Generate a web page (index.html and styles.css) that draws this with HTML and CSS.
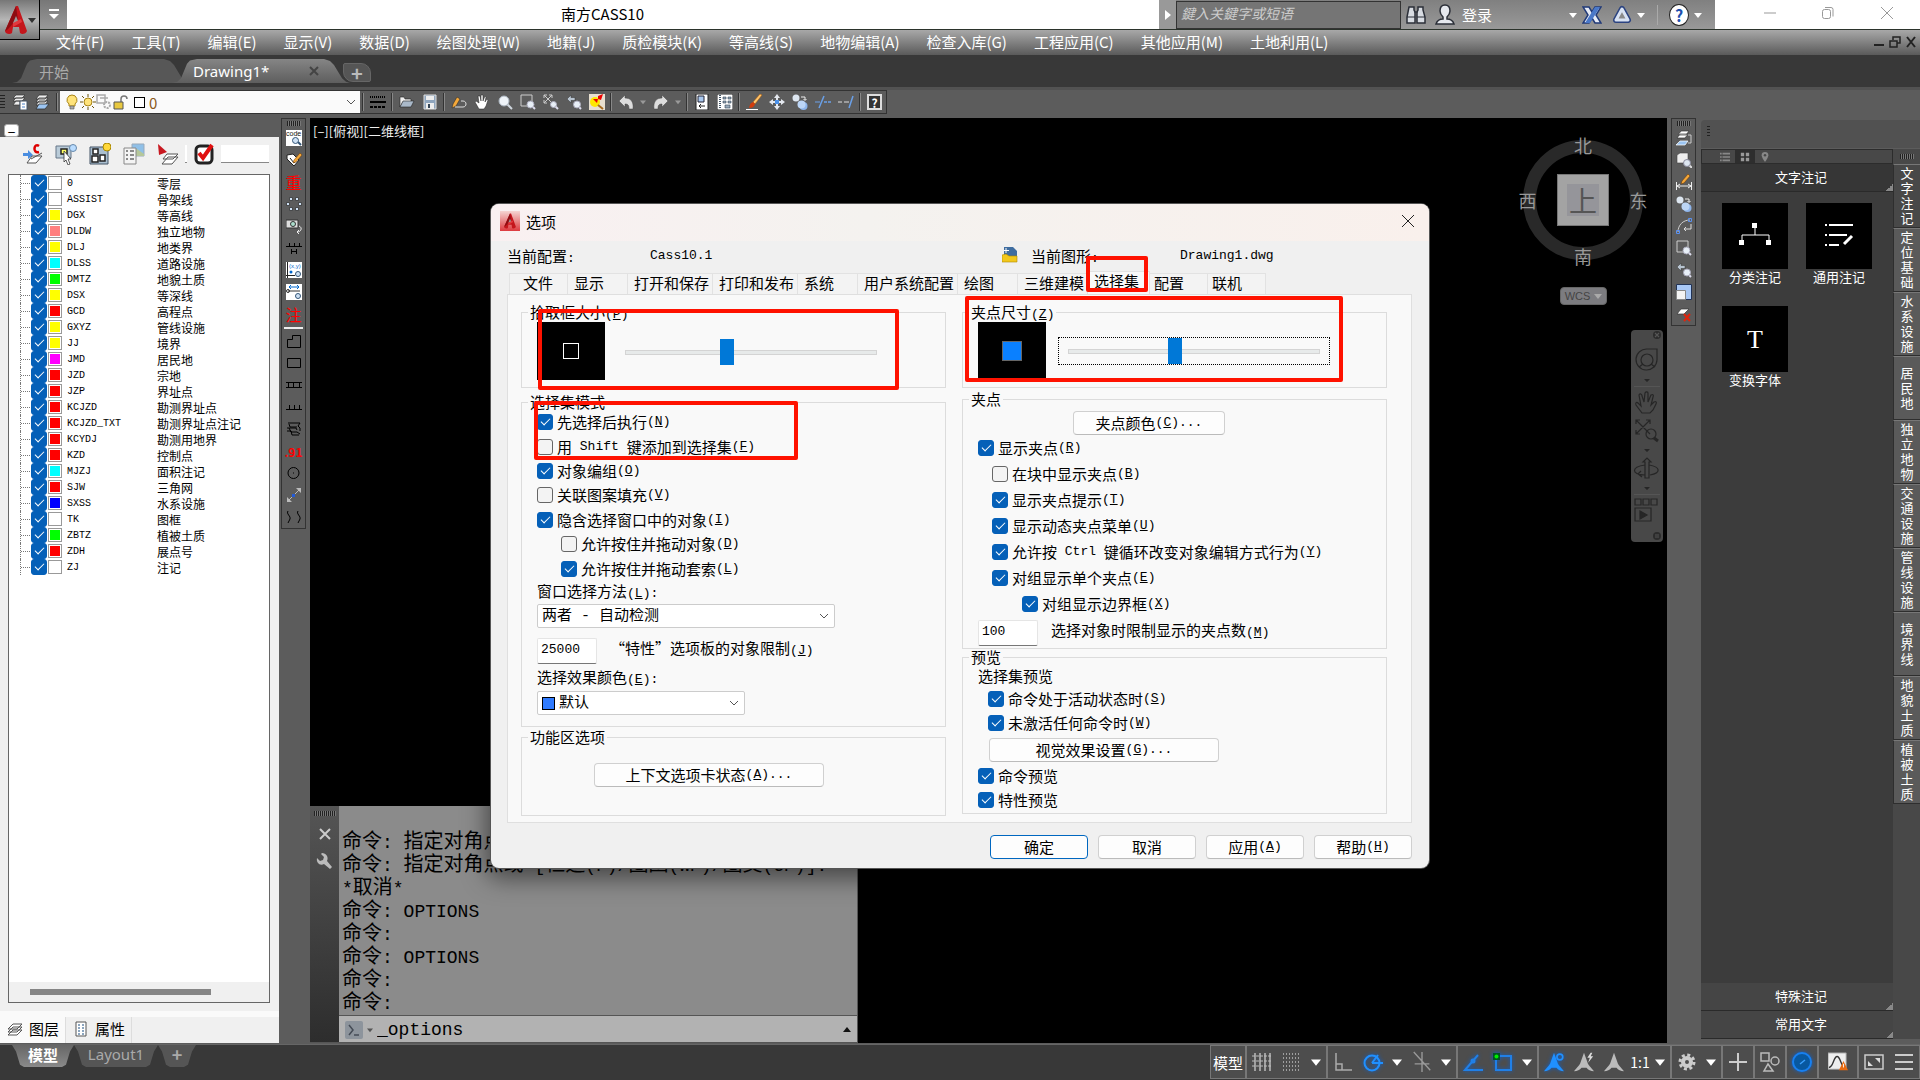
FILE: index.html
```html
<!DOCTYPE html>
<html lang="zh-CN">

<head>
    <meta charset="UTF-8">
    <meta name="viewport" content="width=device-width, initial-scale=1.0">
    <title>南方CASS10</title>
    <link rel="stylesheet" href="styles.css">
</head>

<body>
    <!-- shared icons -->
    <svg class="defs" aria-hidden="true">
        <symbol id="logo" viewBox="0 0 24 30"><path d="M12 1L1 26c0 3 5 4 7 2l1-6h6l1 6c2 2 6 1 7-2L14 1z" fill="#c4161c"/><path d="M12 1L1 26c3-1 6-5 8-8l5-3z" fill="#8d0d12"/><path d="M12 11l3 7H9z" fill="#9a9a9a"/><path d="M9 18l8-4 1 3-9 5z" fill="#e2383d"/></symbol>
        <symbol id="lens" viewBox="0 0 16 16"><path d="M10 10l5 5" stroke="#cfd6dd" stroke-width="2"/><circle cx="7" cy="7" r="5" fill="#eef3f8" stroke="#aab4bf"/></symbol>
        <symbol id="zoomwin" viewBox="0 0 16 16"><path d="M1 1h11v6M1 1v11h6" fill="none" stroke="#ccc"/><path d="M12 12l3 3" stroke="#dde" stroke-width="2"/><circle cx="10.500" cy="10.500" r="3.500" fill="#e8eff7" stroke="#aab"/></symbol>
        <symbol id="zoomext" viewBox="0 0 16 16"><path d="M1 1l8 8M9 1L1 9M1 4V1h3M6 1h3v3M1 6v3h3" fill="none" stroke="#ccc"/><path d="M12 12l3 3" stroke="#dde" stroke-width="2"/><circle cx="10.500" cy="10.500" r="3" fill="#e8eff7" stroke="#aab"/></symbol>
        <symbol id="zoomprev" viewBox="0 0 16 16"><path d="M1 5l4-4v2.500h4v3H5V9z" fill="#b8c4d0" stroke="#333" stroke-width=".5"/><path d="M13 13l2 2" stroke="#dde" stroke-width="2"/><circle cx="11" cy="10.500" r="3.500" fill="#e8eff7" stroke="#aab"/></symbol>
        <symbol id="copy" viewBox="0 0 16 16"><circle cx="4" cy="4" r="3.500" fill="#dde6f0"/><circle cx="11.500" cy="12" r="4" fill="#8db4ea"/><circle cx="9.500" cy="10.500" r="4" fill="#bcd5f5"/><path d="M9 3h4v3M11.500 5L13 6.500 14.500 5" fill="none" stroke="#eee"/></symbol>
        <symbol id="sheets" viewBox="0 0 16 16"><path d="M4 1h9L10 5H1zM4 4h9l-3 4H1zM4 7h9l-3 4H1z" fill="#eee" stroke="#333" stroke-width=".8"/><path d="M4 10h10l-4 5H1z" fill="#9cc5f2" stroke="#333" stroke-width=".8"/></symbol>
        <symbol id="layers" viewBox="0 0 16 16"><path d="M6 9h9l-5 5H1zM6 6h9l-5 5H1zM6 3h9l-5 5H1z" fill="#fff" stroke="#555"/></symbol>
        <symbol id="bulb" viewBox="0 0 16 16"><path d="M8 1a5 5 0 0 0-3 9v2h6v-2a5 5 0 0 0-3-9z" fill="#ffe37a" stroke="#a88418"/><path d="M6 12h4v3H6z" fill="#aaa" stroke="#555" stroke-width=".6"/></symbol>
        <symbol id="undo" viewBox="0 0 16 16"><path d="M1 7l6-6v3c5 0 9 3 8 11H11c0-4-1-5-4-5v3z" fill="#ddd" stroke="#444" stroke-width=".5"/></symbol>
        <symbol id="down" viewBox="0 0 8 8"><path d="M0 2h8L4 7z" fill="currentColor"/></symbol>
        <symbol id="scale" viewBox="0 0 24 24"><path d="M12 1l4 11c1 4 4 6 8 11-4 0-7-1-9-4h-6c-2 3-5 4-9 4 4-5 7-7 8-11z" fill="currentColor"/></symbol>
        <symbol id="chevron" viewBox="0 0 10 6"><path d="M1 1l4 4 4-4" fill="none" stroke="#555"/></symbol>
    </svg>

    <header class="titlebar">
        <button class="app-button" aria-label="应用程序菜单"><svg width="24" height="30"><use href="#logo"/></svg><svg class="arrow dark"><use href="#down"/></svg></button>
        <button class="quick-access" aria-label="自定义快速访问工具栏"><svg width="12" height="12" viewBox="0 0 12 12"><path d="M1 1h10" stroke="#fff" stroke-width="2"/><path d="M1 5h10l-5 5z" fill="#fff"/></svg></button>
        <h1>南方CASS10</h1>
        <div class="infocenter">
            <button class="expand" aria-label="展开"><svg width="6" height="10" viewBox="0 0 6 10"><path d="M0 0l6 5-6 5z" fill="#fff"/></svg></button>
            <input class="search" type="text" placeholder="鍵入关鍵字或短语" aria-label="搜索">
            <button aria-label="查找"><svg width="20" height="20" viewBox="0 0 20 20"><path d="M3 2h5v3l1 2v11H1v-6zM12 2h5v3l2 7v6h-8V7l1-2z" fill="#d8dce2" stroke="#2b2f38" stroke-width="1.500"/><path d="M8 7h4M1 12h8M11 12h8" stroke="#2b2f38"/></svg></button>
            <button class="login"><svg width="20" height="22" viewBox="0 0 20 22"><path d="M10 1c-4 0-5 3-5 6s2 5 3 6v2c-4 0-6 2-7 5h18c-1-3-3-5-7-5v-2c1-1 3-3 3-6s-1-6-5-6z" fill="#e5e8ee" stroke="#2b2f38" stroke-width="1.500"/></svg>登录</button>
            <svg class="arrow"><use href="#down"/></svg>
            <button aria-label="Exchange"><svg width="20" height="20" viewBox="0 0 20 20"><path d="M1 2h6l3 5 3-5h6l-5 8 5 8h-6l-3-5-3 5H1l5-8z" fill="#e6ebf5" stroke="#213a78" stroke-width="1.500"/><path d="M13 2h5L8 18H3z" fill="#4a78c8"/></svg></button>
            <button class="a360" aria-label="Autodesk 360"><svg width="20" height="20" viewBox="0 0 20 20"><path d="M10 4l6 11H4z" fill="none" stroke="#2b4380" stroke-width="6" stroke-linejoin="round"/><path d="M10 4l6 11H4z" fill="#8a8a8a" stroke="#d8e2f2" stroke-width="3" stroke-linejoin="round"/></svg></button>
            <svg class="arrow"><use href="#down"/></svg>
            <span class="divider"></span>
            <button class="help" aria-label="帮助"><span>?</span></button>
            <svg class="arrow"><use href="#down"/></svg>
        </div>
        <div class="window-buttons">
            <button aria-label="最小化"><svg width="14" height="14" viewBox="0 0 14 14"><path d="M1 7h12" stroke="#999"/></svg></button>
            <button aria-label="还原"><svg width="14" height="14" viewBox="0 0 14 14" fill="none" stroke="#999"><rect x="1.500" y="3.500" width="8" height="9" rx="2"/><path d="M4 1.500h6a2 2 0 0 1 2 2v7"/></svg></button>
            <button aria-label="关闭"><svg width="14" height="14" viewBox="0 0 14 14"><path d="M1 1l12 12M13 1L1 13" stroke="#999"/></svg></button>
        </div>
    </header>

    <nav class="menubar">
        <a href="#">文件(F)</a><a href="#">工具(T)</a><a href="#">编辑(E)</a><a href="#">显示(V)</a><a href="#">数据(D)</a><a href="#">绘图处理(W)</a><a href="#">地籍(J)</a><a href="#">质检模块(K)</a><a href="#">等高线(S)</a><a href="#">地物编辑(A)</a><a href="#">检查入库(G)</a><a href="#">工程应用(C)</a><a href="#">其他应用(M)</a><a href="#">土地利用(L)</a>
        <div class="mdi">
            <svg width="12" height="12" viewBox="0 0 12 12"><path d="M1 9h10" stroke="#222" stroke-width="2"/></svg>
            <svg width="12" height="12" viewBox="0 0 12 12" fill="none" stroke="#222" stroke-width="1.500"><path d="M4 4V1h7v6H8M1 5h7v6H1z"/></svg>
            <svg width="12" height="12" viewBox="0 0 12 12"><path d="M2 1l8 10M10 1L2 11" stroke="#222" stroke-width="2"/></svg>
        </div>
    </nav>

    <div class="doc-tabs">
        <button class="doc-tab">开始</button>
        <button class="doc-tab active">Drawing1*<svg width="10" height="10" viewBox="0 0 10 10"><path d="M1 1l8 8M9 1L1 9" stroke="#444" stroke-width="2"/></svg></button>
        <button class="add-tab" aria-label="新图形">+</button>
    </div>

    <div class="toolbar-row">
        <div class="toolbar">
            <span class="grip-v"></span>
            <button><svg viewBox="0 0 16 16"><path d="M4 1h9l-3 3H1zM4 4h9l-3 3H1zM4 7h4v4H1z" fill="#eee" stroke="#333" stroke-width=".7"/><path d="M8 7h7v9H8z" fill="#fff" stroke="#456"/><path d="M10 10h3M10 13h3" stroke="#4a82c8"/></svg></button>
            <button><svg><use href="#sheets"/></svg></button>
            <span class="sep"></span>
            <div class="layer-combo">
                <svg><use href="#bulb"/></svg>
                <svg viewBox="0 0 16 16"><circle cx="8" cy="8" r="4" fill="#ffe37a" stroke="#a88418"/><path d="M8 0v3M8 13v3M0 8h3M13 8h3M2 2l2 2M12 12l2 2M14 2l-2 2M2 14l2-2" stroke="#6b5410"/></svg>
                <svg viewBox="0 0 16 16"><path d="M1 1h8v8H1zM4 4h8" fill="none" stroke="#aaa" stroke-width="1.500"/><circle cx="11" cy="11" r="3" fill="none" stroke="#aaa" stroke-width="2" stroke-dasharray="2 1"/></svg>
                <svg viewBox="0 0 16 16"><path d="M9 8V5a3 3 0 0 1 6 0" fill="none" stroke="#777" stroke-width="1.500"/><path d="M2 8h9v7H2z" fill="#e8c840" stroke="#555"/></svg>
                <span class="layer-color"></span>
                <select aria-label="图层"><option>0</option></select>
                <svg class="chev"><use href="#chevron"/></svg>
            </div>
            <span class="sep"></span>
            <button><svg viewBox="0 0 16 16"><path d="M0 3h16" stroke="#000" stroke-width="2" stroke-dasharray="1 1"/><path d="M0 8h16" stroke="#000" stroke-width="2"/><path d="M0 13h16" stroke="#000" stroke-width="2" stroke-dasharray="3 1"/></svg></button>
            <span class="sep"></span>
            <button><svg viewBox="0 0 16 16"><path d="M1 3h4l1 2h6v3H4l-3 5z" fill="#eee" stroke="#222" stroke-width=".6"/><path d="M4 7h11l-3 6H1z" fill="#aab9c9" stroke="#222" stroke-width=".6"/></svg></button>
            <button><svg viewBox="0 0 16 16"><path d="M2 1h12v14H2z" fill="#8fa5bd" stroke="#ddd"/><path d="M4 2h8v4H4zM4 9h8v6H4z" fill="#eee"/><path d="M6 10h2v4H6z" fill="#345"/></svg></button>
            <span class="sep"></span>
            <button><svg viewBox="0 0 16 16"><path d="M1 14l1-4 4-7 3 2-4 7z" fill="#f4a83a" stroke="#222" stroke-width=".5"/><path d="M4 13h8c4 0 4-6 0-6h-2" fill="none" stroke="#ddd"/></svg></button>
            <button><svg viewBox="0 0 16 16"><path d="M5 15L1 8l1-1 3 2-1-7 2 0 1 5V1h2l0 6 2-5 1 1-1 5 2-3 1 1-2 6-2 3z" fill="#fff" stroke="#222" stroke-width=".5"/></svg></button>
            <button><svg><use href="#lens"/></svg></button>
            <button><svg><use href="#zoomwin"/></svg></button>
            <button><svg><use href="#zoomext"/></svg></button>
            <button><svg><use href="#zoomprev"/></svg></button>
            <button><svg viewBox="0 0 16 16"><path d="M0 0h16v16H0z" fill="#e8e0d0"/><circle cx="6" cy="8" r="5" fill="#ffe800"/><path d="M4 5h5V2l5-2-2 6-3-1-1 4z" fill="#e00"/><path d="M9 11l5 4" stroke="#a66a20" stroke-width="2"/></svg></button>
            <span class="sep"></span>
            <button><svg><use href="#undo"/></svg></button>
            <svg class="arrow mini"><use href="#down"/></svg>
            <button><svg class="flip"><use href="#undo"/></svg></button>
            <svg class="arrow mini"><use href="#down"/></svg>
            <span class="sep"></span>
            <button><svg viewBox="0 0 16 16"><path d="M2 0h12v16H2z" fill="#fff" stroke="#222"/><path d="M4 2h6v6H4z" fill="#a9c8ee" stroke="#223"/><path d="M5 12h6M7 10l-2 2 2 2" fill="none" stroke="#222"/></svg></button>
            <button><svg viewBox="0 0 16 16"><path d="M0 0h16v16H0z" fill="#fff" stroke="#222"/><path d="M3 1v14" stroke="#456" stroke-width="2" stroke-dasharray="1 1"/><path d="M6 3h3v2H6zM11 3h3v2h-3zM6 7h3v2H6zM11 7h3v2h-3zM8 11h5v3H8z" fill="#9ab" stroke="#345" stroke-width=".6"/></svg></button>
            <span class="sep"></span>
            <button><svg viewBox="0 0 16 16"><path d="M14 0l2 1-7 9-2-2z" fill="#ffc56b" stroke="#a50" stroke-width=".5"/><path d="M7 8l2 2c-1 3-3 4-6 4 1-3 1-5 4-6z" fill="#d23c0c"/><path d="M0 15.500h12" stroke="#fff"/></svg></button>
            <button><svg viewBox="0 0 16 16"><path d="M8 0l3 4H9v2H7V4H5zM8 16l3-4H9v-2H7v2H5zM0 8l4-3v2h2v2H4v2zM16 8l-4-3v2h-2v2h2v2z" fill="#e4e8ee"/><path d="M6 6h4v4H6z" fill="#4a90e8"/></svg></button>
            <button><svg><use href="#copy"/></svg></button>
            <button><svg viewBox="0 0 16 16"><path d="M0 8h5" stroke="#6aa0e8"/><path d="M9 2L4 14M9 8h3M13 8h3" stroke="#6aa0e8" stroke-width="1.500"/></svg></button>
            <button><svg viewBox="0 0 16 16"><path d="M0 8h4M6 8h5" stroke="#ddd"/><path d="M15 2l-4 12" stroke="#6aa0e8" stroke-width="1.500"/></svg></button>
            <span class="sep"></span>
            <button class="help-box" aria-label="帮助">?</button>
        </div>
    </div>

    <main class="workspace">
        <aside class="layer-palette">
            <button class="collapse" aria-label="折叠">–</button>
            <div class="palette-body">
                <div class="palette-tools">
                    <button><svg viewBox="0 0 22 22"><path d="M1 10h5V7l5 5-5 4v-3H1z" fill="#4a8de0"/><path d="M10 13h10l-6 7H5zM9 16l11-6" fill="#fff" stroke="#555"/><path d="M17 3c-5-4-7 8 0 6" fill="none" stroke="#d00" stroke-width="2.500"/></svg></button>
                    <button><svg viewBox="0 0 22 22"><path d="M1 3h15v12H1z" fill="#b9cbd8" stroke="#678"/><path d="M6 6h6v5H6z" fill="#ff6" stroke="#222" stroke-width="1.500"/><path d="M9 8l7 8h-3l2 5-2 1-2-5-2 2z" fill="#fff" stroke="#333" stroke-width=".8"/><circle cx="18" cy="5" r="3.500" fill="#b9dcff" stroke="#68a"/></svg></button>
                    <button><svg viewBox="0 0 22 22"><path d="M1 4h18v17H1z" fill="#aabfd0" stroke="#456"/><path d="M4 6h5v5H4zM3 13h6v6H3zM11 12h5v6h-5z" fill="#fff" stroke="#222" stroke-width="1.500"/><circle cx="18" cy="4" r="4" fill="#ffd83a" stroke="#a80"/></svg></button>
                    <button><svg viewBox="0 0 22 22"><path d="M9 1h12v12H9z" fill="#8fc0e8" stroke="#9ab"/><path d="M9 10l5-4 7 5v2H9z" fill="#b5c79a"/><path d="M1 5h12v16H1z" fill="#f4f4f4" stroke="#888"/><path d="M3 8h2M7 8h4M3 12h2M7 12h4M3 16h2M7 16h4" stroke="#666" stroke-width="1.500"/></svg></button>
                    <button><svg viewBox="0 0 22 22"><path d="M11 14h10l-6 7H5zM10 11h11l-5 5H6z" fill="#fff" stroke="#555"/><path d="M1 1l9 8-8 3z" fill="#c81820"/></svg></button>
                    <span class="thin-box"></span>
                    <button><svg viewBox="0 0 22 22"><rect x="3" y="3" width="16" height="17" rx="4" fill="#fff" stroke="#222" stroke-width="3"/><path d="M6 10l4 5 9-13" fill="none" stroke="#e01010" stroke-width="4"/></svg></button>
                    <input type="text" aria-label="过滤">
                </div>
                <div class="layer-box">
                    <ul class="layer-list">
                        <li><label><input type="checkbox" checked><i></i><b>0</b>零层</label></li>
                        <li><label><input type="checkbox" checked><i></i><b>ASSIST</b>骨架线</label></li>
                        <li><label><input type="checkbox" checked><i class="yellow"></i><b>DGX</b>等高线</label></li>
                        <li><label><input type="checkbox" checked><i class="pink"></i><b>DLDW</b>独立地物</label></li>
                        <li><label><input type="checkbox" checked><i class="yellow"></i><b>DLJ</b>地类界</label></li>
                        <li><label><input type="checkbox" checked><i class="cyan"></i><b>DLSS</b>道路设施</label></li>
                        <li><label><input type="checkbox" checked><i class="green"></i><b>DMTZ</b>地貌土质</label></li>
                        <li><label><input type="checkbox" checked><i class="yellow"></i><b>DSX</b>等深线</label></li>
                        <li><label><input type="checkbox" checked><i class="red"></i><b>GCD</b>高程点</label></li>
                        <li><label><input type="checkbox" checked><i class="yellow"></i><b>GXYZ</b>管线设施</label></li>
                        <li><label><input type="checkbox" checked><i class="yellow"></i><b>JJ</b>境界</label></li>
                        <li><label><input type="checkbox" checked><i class="magenta"></i><b>JMD</b>居民地</label></li>
                        <li><label><input type="checkbox" checked><i class="red"></i><b>JZD</b>宗地</label></li>
                        <li><label><input type="checkbox" checked><i class="red"></i><b>JZP</b>界址点</label></li>
                        <li><label><input type="checkbox" checked><i class="red"></i><b>KCJZD</b>勘测界址点</label></li>
                        <li><label><input type="checkbox" checked><i class="red"></i><b>KCJZD_TXT</b>勘测界址点注记</label></li>
                        <li><label><input type="checkbox" checked><i class="red"></i><b>KCYDJ</b>勘测用地界</label></li>
                        <li><label><input type="checkbox" checked><i class="red"></i><b>KZD</b>控制点</label></li>
                        <li><label><input type="checkbox" checked><i class="cyan"></i><b>MJZJ</b>面积注记</label></li>
                        <li><label><input type="checkbox" checked><i class="red"></i><b>SJW</b>三角网</label></li>
                        <li><label><input type="checkbox" checked><i class="blue"></i><b>SXSS</b>水系设施</label></li>
                        <li><label><input type="checkbox" checked><i></i><b>TK</b>图框</label></li>
                        <li><label><input type="checkbox" checked><i class="green"></i><b>ZBTZ</b>植被土质</label></li>
                        <li><label><input type="checkbox" checked><i class="red"></i><b>ZDH</b>展点号</label></li>
                        <li><label><input type="checkbox" checked><i></i><b>ZJ</b>注记</label></li>
                    </ul>
                    <div class="scrollbar"><span></span></div>
                </div>
            </div>
            <div class="palette-tabs">
                <button class="active"><svg viewBox="0 0 16 16"><use href="#layers"/></svg>图层</button>
                <button><svg viewBox="0 0 16 16"><path d="M3 1h10v14H3z" fill="#fff" stroke="#555"/><path d="M5 4h2M9 4h2M5 7h2M9 7h2M5 10h2M9 10h2M5 13h2M9 13h2" stroke="#68a" stroke-width="1.500"/></svg>属性</button>
            </div>
        </aside>

        <div class="side-toolbar">
            <span class="grip-h"></span>
            <button><svg viewBox="0 0 16 16"><path d="M0 0h16v16H0z" fill="#fff"/><text x="0" y="6" font-size="7" font-family="Liberation Sans" fill="#111">code</text><path d="M12 12l3 3" stroke="#357" stroke-width="2"/><circle cx="9.500" cy="10.500" r="3" fill="#cfe2f5" stroke="#357"/></svg></button>
            <button><svg viewBox="0 0 16 16"><path d="M1 3l6-1 6 6-5 6-7-7z" fill="#fff" stroke="#222"/><path d="M4 6l4 5 4-5" fill="none" stroke="#222"/><path d="M14 1l2 2-6 7-3 1 1-3z" fill="#f4a83a" stroke="#630" stroke-width=".5"/></svg></button>
            <button class="glyph">重</button>
            <button><svg viewBox="0 0 16 16" fill="#cfe2f5" stroke="#333" stroke-width=".8"><path d="M3.500 1.500h3v3h-3zM9.500 1.500h3v3h-3zM.5 6.500h3v3h-3zM12.500 6.500h3v3h-3zM3.500 11.500h3v3h-3zM9.500 11.500h3v3h-3z"/></svg></button>
            <button><svg viewBox="0 0 16 16"><path d="M0 2h12v8H0z" fill="#ddd" stroke="#333"/><circle cx="7" cy="6" r="2.500" fill="#adc" stroke="#333"/><path d="M13 8c3 1 3 5-1 6M13 12l-2 2 2 2" fill="none" stroke="#eee"/></svg></button>
            <button><svg viewBox="0 0 16 16" fill="none" stroke="#000"><path d="M0 6.500h16M3.500 3v3M8.500 3v3M13.500 3v3M5.500 9v5M10.500 9v5M5.500 11.500h5"/></svg></button>
            <button><svg viewBox="0 0 16 16"><path d="M0 0h16v16H0z" fill="#fff"/><path d="M1.500 0v16M0 13.500h9" stroke="#222"/><text x="3" y="6" font-size="6" font-family="Liberation Sans" fill="#06c">(x,y)</text><circle cx="5" cy="10" r="1.500" fill="#06c"/><circle cx="12" cy="12" r="2.500" fill="#cfe2f5" stroke="#357"/></svg></button>
            <button><svg viewBox="0 0 16 16"><path d="M0 0h16v16H0z" fill="#fff"/><path d="M4 3h8M5 1L3 3l2 2M11 1l2 2-2 2" fill="none" stroke="#06c"/><path d="M2 7h12" stroke="#333"/><circle cx="2" cy="7" r="1.500" fill="none" stroke="#333"/><circle cx="12" cy="12" r="2.500" fill="#cfe2f5" stroke="#357"/></svg></button>
            <button class="glyph">注</button>
            <hr>
            <button><svg viewBox="0 0 16 16" fill="none" stroke="#000"><path d="M1.500 6.500h5v-4h8v12h-13z"/></svg></button>
            <button><svg viewBox="0 0 16 16" fill="none" stroke="#000"><path d="M1.500 3.500h13v9h-13z"/></svg></button>
            <button><svg viewBox="0 0 16 16" fill="none" stroke="#000"><path d="M0 5.500h16M0 10.500h16M2.500 5v5M7.500 5v5M13.500 5v5"/></svg></button>
            <button><svg viewBox="0 0 16 16" fill="none" stroke="#000"><path d="M0 10.500h16M3.500 6v4M8.500 6v4M13.500 6v4"/></svg></button>
            <button><svg viewBox="0 0 16 16" fill="none" stroke="#000"><path d="M2 2h12l-2 3 2 2v3M3 3l1 3h7M1 7h9l1 2M3 7l2 4h6l3 2M1 10h4l1 4h7"/></svg></button>
            <button class="glyph small">.91</button>
            <button><svg viewBox="0 0 16 16" fill="none" stroke="#000"><circle cx="7.500" cy="8" r="5.500"/><path d="M7 8h1"/></svg></button>
            <button><svg viewBox="0 0 16 16"><path d="M3 13L13 3" stroke="#bbb"/><path d="M1 10v5h5zM10 1h5v5z" fill="#bbb"/><path d="M6 7h3v3H6z" fill="#235bd8"/></svg></button>
            <button><svg viewBox="0 0 16 16" fill="none" stroke="#000"><path d="M2 2c-2 3 3 5 2 8l-2 4M12 2c-2 3 3 5 2 8l-2 4"/></svg></button>
        </div>

        <section class="canvas">
            <p class="view-label">[–][俯视][二维线框]</p>

            <div class="viewcube">
                <span class="north">北</span><span class="west">西</span><button class="face">上</button><span class="east">东</span><span class="south">南</span>
            </div>
            <button class="wcs">WCS <svg class="arrow"><use href="#down"/></svg></button>

            <div class="navbar">
                <svg viewBox="0 0 32 212" fill="none" stroke="#262626" stroke-width="1.200">
                    <circle cx="26" cy="5" r="4" fill="#2c2c2c" stroke="none"/><path d="M24 3l4 4M28 3l-4 4" stroke="#555"/>
                    <path d="M16 19h10v11a10.500 10.500 0 1 1-10-11z"/><circle cx="16" cy="30" r="6"/><path d="M8 37l4-3M24 37l-4-3"/>
                    <path d="M13 49h6l-3 3zM13 119h6l-3 3zM13 157h6l-3 3z" fill="#262626" stroke="none"/>
                    <path d="M3 56.500h26M3 164.500h26" stroke="#555"/>
                    <path d="M11 83l-6-8c-1-3 1-3 2-2l3 3-2-11c1-2 3-1 3 1l2 6 1-9c1-2 3-1 3 0v9l3-7c2-1 3 0 2 2l-2 8 3-3c2-1 3 0 2 2l-3 6-3 3z"/>
                    <path d="M5 90l14 14M19 90L5 104M5 94v-4h4M15 90h4v4M5 100v4h4"/><circle cx="20" cy="104" r="5"/><path d="M23 108l4 3" stroke-width="3"/>
                    <path d="M14 148v-16h-2l4-4 4 4h-2v16zM14 135c-14 2-14 9 0 10M18 135c12 2 12 8 1 10M10 141l-3 3 4 3"/>
                    <path d="M4 169h6v6H4zM12 169h6v6h-6zM20 169h6v6h-6zM4 178h16v13H4z"/><path d="M9 181l7 4-7 4z" fill="#262626"/>
                    <circle cx="26" cy="206" r="4" fill="#2c2c2c" stroke="none"/><path d="M24 205h4M24 207h4" stroke="#555"/>
                </svg>
            </div>

            <div class="command-window">
                <div class="command-strip">
                    <span class="grip-h"></span>
                    <svg width="14" height="14" viewBox="0 0 14 14"><path d="M2 2l10 10M12 2L2 12" stroke="#ccc" stroke-width="2"/></svg>
                    <svg width="18" height="18" viewBox="0 0 18 18"><path d="M6 1l-1 1 3 3-1 3-3 1-3-3c-1 5 3 8 7 6l6 5 2-2-5-6c2-4-1-8-5-8z" fill="#bbb"/></svg>
                </div>
                <div class="command-main">
                    <div class="history">
                        <p>命令<span>:&nbsp;</span>指定对角点或<span>&nbsp;[</span>栏选<span>(F)/</span>圈围<span>(WP)/</span>圈交<span>(CP)]:</span></p>
                        <p>命令<span>:&nbsp;</span>指定对角点或<span>&nbsp;[</span>栏选<span>(F)/</span>圈围<span>(WP)/</span>圈交<span>(CP)]:</span></p>
                        <p><span>*</span>取消<span>*</span></p>
                        <p>命令<span>: OPTIONS</span></p>
                        <p>命令<span>:</span></p>
                        <p>命令<span>: OPTIONS</span></p>
                        <p>命令<span>:</span></p>
                        <p>命令<span>:</span></p>
                    </div>
                    <div class="prompt">
                        <svg width="18" height="18" viewBox="0 0 18 18"><rect width="18" height="18" rx="2" fill="#8d949c"/><path d="M4 4l4 5-4 5M9 14h5" fill="none" stroke="#444b55" stroke-width="1.500"/></svg>
                        <svg class="arrow"><use href="#down"/></svg>
                        <input type="text" value="_options" aria-label="命令">
                        <svg class="arrow up"><use href="#down"/></svg>
                    </div>
                </div>
            </div>
        </section>

        <div class="side-toolbar right">
            <span class="grip-h"></span>
            <button><svg viewBox="0 0 16 16"><path d="M4 4h8L9 8H1zM5 1h8l-3 4H2z" fill="#fff" stroke="#333" stroke-width=".7"/><path d="M4 11h8l-3 4H0z" fill="#9cc5f2" stroke="#fff" stroke-width=".7"/><path d="M12 5h3v8h-3" fill="none" stroke="#ccc"/></svg></button>
            <button><svg viewBox="0 0 16 16"><path d="M1 3l3-2h8v8l-2 2H1z" fill="#eee" stroke="#444" stroke-width=".6"/><path d="M13 13l3 3" stroke="#ddd" stroke-width="2"/><circle cx="11" cy="11" r="3.500" fill="#dde6f0" stroke="#889"/></svg></button>
            <button><svg viewBox="0 0 16 16"><path d="M.5 8v8M15.500 8v8M1 12h14M4 10l-3 2 3 2M12 10l3 2-3 2" fill="none" stroke="#eee"/><path d="M12 0l2 2-6 7-3 1 1-3z" fill="#f4a83a" stroke="#630" stroke-width=".5"/></svg></button>
            <button><svg><use href="#copy"/></svg></button>
            <button><svg viewBox="0 0 16 16" fill="none"><path d="M2 14C2 7 7 2 14 2" stroke="#ccc"/><path d="M15 6v5H8M10 9l-2 2 2 2" stroke="#ddd"/><path d="M.5 12.500h3v3h-3zM12.500.5h3v3h-3z" stroke="#5a90f0"/></svg></button>
            <button><svg><use href="#zoomwin"/></svg></button>
            <button><svg><use href="#zoomprev"/></svg></button>
            <button><svg viewBox="0 0 16 16"><path d="M.5.5h15v15H.5z" fill="#a9c8f5" stroke="#235"/><path d="M.5 6.500h9v9h-9z" fill="#f4f4f4" stroke="#888"/></svg></button>
            <button><svg viewBox="0 0 16 16"><path d="M5 3h8L8 8H1z" fill="#fff" stroke="#333" stroke-width=".7"/><path d="M8 8l6 7M14 8l-6 7" stroke="#e0240c" stroke-width="2"/></svg></button>
        </div>

        <aside class="tool-palette">
            <div class="palette-head"><span class="grip-v"></span></div>
            <div class="palette-columns">
                <div class="palette-main">
                    <div class="view-modes">
                        <button aria-label="列表"><svg viewBox="0 0 12 10"><path d="M0 1h2M3 1h9M0 5h2M3 5h9M0 9h2M3 9h9" stroke="#888" stroke-width="2"/></svg></button>
                        <button class="active" aria-label="图标"><svg viewBox="0 0 12 10"><path d="M1 0h4v4H1zM7 0h4v4H7zM1 6h4v4H1zM7 6h4v4H7z" fill="#999"/></svg></button>
                        <button aria-label="位置"><svg viewBox="0 0 12 12"><path d="M6 0a4 4 0 0 0-4 4c0 3 4 8 4 8s4-5 4-8a4 4 0 0 0-4-4z" fill="#888"/><circle cx="6" cy="4" r="1.500" fill="#484848"/></svg></button>
                    </div>
                    <h2 class="section">文字注记</h2>
                    <div class="tiles">
                        <button class="tile"><svg viewBox="0 0 66 66"><path d="M33 22v10M20 40v-8h27v8" fill="none" stroke="#fff"/><path d="M30 20h5v5h-5zM17 37h5v5h-5zM44 37h5v5h-5z" fill="#fff"/></svg>分类注记</button>
                        <button class="tile"><svg viewBox="0 0 66 66"><path d="M19 22h2M23 22h24M19 32h2M23 32h18M19 42h2M23 42h10" stroke="#fff" stroke-width="2"/><path d="M38 41l8-8" stroke="#fff" stroke-width="3"/></svg>通用注记</button>
                        <button class="tile"><span class="letter">T</span>变换字体</button>
                    </div>
                    <h2 class="section low">特殊注记</h2>
                    <h2 class="section low">常用文字</h2>
                </div>
                <nav class="category-tabs">
                    <div class="tabs-grip"><span class="grip-h"></span></div>
                    <button class="active">文字注记</button><button>定位基础</button><button>水系设施</button><button>居民地</button><button>独立地物</button><button>交通设施</button><button>管线设施</button><button>境界线</button><button>地貌土质</button><button>植被土质</button>
                </nav>
            </div>
        </aside>
    </main>

    <footer class="statusbar">
        <div class="layout-tabs">
            <button class="active">模型</button><button>Layout1</button><button class="plus" aria-label="新建布局">+</button>
        </div>
        <div class="status-cells">
            <div class="cell"><button class="text">模型</button></div>
            <div class="cell">
                <button><svg viewBox="0 0 20 20"><path d="M3 1v18M8 1v18M13 1v18M18 1v18" stroke="#bbb" stroke-width="1.500"/><path d="M0 4h20M0 9h20M0 14h20" stroke="#bbb" stroke-dasharray="3 1"/></svg></button>
                <button><svg viewBox="0 0 20 20"><path d="M1 2h18M1 6h18M1 10h18M1 14h18M1 18h18" stroke="#bbb" stroke-width="1.500" stroke-dasharray="1 2"/></svg></button>
                <svg class="arrow"><use href="#down"/></svg>
            </div>
            <div class="cell">
                <button><svg viewBox="0 0 20 20" fill="none" stroke="#aaa" stroke-width="1.500"><path d="M3 1v17h16M3 12h6v6"/></svg></button>
                <button class="on"><svg viewBox="0 0 20 20" fill="none" stroke="#2090ff" stroke-width="2"><circle cx="9" cy="11" r="7.500"/><path d="M9 11h11M9 11l6-8"/></svg></button>
                <svg class="arrow"><use href="#down"/></svg>
                <button><svg viewBox="0 0 20 24" fill="none" stroke="#999" stroke-width="1.500"><path d="M10 1v22M1 1l18 20M2 14h16"/></svg></button>
                <svg class="arrow"><use href="#down"/></svg>
            </div>
            <div class="cell">
                <button class="on"><svg viewBox="0 0 20 20" fill="none" stroke="#2080e8" stroke-width="2"><path d="M15 3L2 18h18"/><circle cx="10" cy="9" r="1.500"/></svg></button>
                <button class="on"><svg viewBox="0 0 20 20"><path d="M3 4h15v14H3z" fill="none" stroke="#2080e8" stroke-width="2"/><path d="M0 1h7v7H0z" fill="#052"/><circle cx="3.500" cy="4.500" r="2" fill="#0e0"/></svg></button>
                <svg class="arrow"><use href="#down"/></svg>
            </div>
            <div class="cell">
                <button class="on blue-icon"><svg viewBox="0 0 24 24"><use href="#scale"/><circle cx="19" cy="6" r="3.500" fill="none" stroke="currentColor" stroke-width="2"/></svg></button>
                <button class="gray-icon"><svg viewBox="0 0 24 24"><use href="#scale"/><path d="M20 1l-4 6h3l-2 6 6-8h-3l2-4z" fill="#ddd"/></svg></button>
                <button class="gray-icon"><svg><use href="#scale"/></svg></button>
                <button class="ratio">1:1</button>
                <svg class="arrow"><use href="#down"/></svg>
            </div>
            <div class="cell">
                <button><svg viewBox="0 0 20 20"><circle cx="10" cy="10" r="4" fill="none" stroke="#ccc" stroke-width="4"/><circle cx="10" cy="10" r="7" fill="none" stroke="#ccc" stroke-width="3" stroke-dasharray="3 2.500"/></svg></button>
                <svg class="arrow"><use href="#down"/></svg>
            </div>
            <div class="cell"><button><svg viewBox="0 0 20 20"><path d="M10 1v18M1 10h18" stroke="#ccc" stroke-width="2"/></svg></button></div>
            <div class="cell"><button><svg viewBox="0 0 20 20" fill="none" stroke="#bbb" stroke-width="1.500"><path d="M1 1h8v8H1zM8 12l5 7H4z"/><circle cx="15" cy="9" r="4"/></svg></button></div>
            <div class="cell"><button class="on"><svg viewBox="0 0 20 20"><circle cx="10" cy="10" r="9" fill="#0858a0" stroke="#1880f0" stroke-width="2"/><path d="M8 12l5-4" stroke="#3aa0ff" stroke-width="1.500"/></svg></button></div>
            <div class="cell wide"><button><svg viewBox="0 0 22 20"><path d="M0 0h20v18H0z" fill="#eee" stroke="#999"/><path d="M1 16C6 16 6 4 10 4s4 12 9 12" fill="none" stroke="#333" stroke-width="1.500"/><path d="M17 9l5 10H12z" fill="#e86a10"/><path d="M17 12v4" stroke="#fff"/></svg></button></div>
            <div class="cell">
                <button><svg viewBox="0 0 20 20"><path d="M1 3h18v14H1z" fill="none" stroke="#ccc" stroke-width="1.500"/><path d="M4 9l5 5H4zM11 6h5v5z" fill="#ddd"/></svg></button>
                <button><svg viewBox="0 0 20 20"><path d="M1 3h18M1 10h18M1 17h18" stroke="#ccc" stroke-width="2"/></svg></button>
            </div>
        </div>
    </footer>

    <!-- options dialog -->
    <form class="dialog" role="dialog" aria-label="选项">
        <div class="dialog-title">
            <span class="dialog-icon"><svg width="14" height="16"><use href="#logo"/></svg></span>
            选项
            <button type="button" class="close" aria-label="关闭"><svg width="14" height="14" viewBox="0 0 14 14"><path d="M1 1l12 12M13 1L1 13" stroke="#222"/></svg></button>
        </div>
        <div class="dialog-content">
            <div class="profile-row">
                <span class="profile-label">当前配置<span class="m">:</span></span>
                <span class="m profile-name">Cass10.1</span>
                <svg width="16" height="16" viewBox="0 0 16 16"><path d="M2 0h9l4 4v7H2z" fill="#3f6da0"/><path d="M0 8l4-1 3 2h8v6H0z" fill="#f2c81c" stroke="#b08a00" stroke-width=".6"/><path d="M4 1v5M2 3.500h5" stroke="#fff"/></svg>
                <span class="drawing-label">当前图形<span class="m">:</span></span>
                <span class="m">Drawing1.dwg</span>
            </div>
            <div class="dialog-tabs">
                <button type="button" class="first">文件</button><button type="button" class="w60">显示</button><button type="button">打开和保存</button><button type="button">打印和发布</button><button type="button" class="w60">系统</button><button type="button">用户系统配置</button><button type="button" class="w60">绘图</button><button type="button">三维建模</button><button type="button" class="active">选择集</button><button type="button" class="w58">配置</button><button type="button" class="w58">联机</button>
            </div>
            <div class="page">
                <div class="column">
                    <fieldset>
                        <legend>拾取框大小<span class="m">(<u>P</u>)</span></legend>
                        <div class="group-body size-row">
                            <div class="preview"><span class="pickbox"></span></div>
                            <div class="slider"><input type="range" min="0" max="100" value="40" aria-label="拾取框大小"></div>
                        </div>
                    </fieldset>
                    <fieldset class="selection-modes">
                        <legend>选择集模式</legend>
                        <div class="group-body">
                            <div class="checks">
                                <label><input type="checkbox" checked>先选择后执行<span class="m">(<u>N</u>)</span></label>
                                <label><input type="checkbox">用<span class="m">&nbsp;Shift&nbsp;</span>键添加到选择集<span class="m">(<u>F</u>)</span></label>
                                <label><input type="checkbox" checked>对象编组<span class="m">(<u>O</u>)</span></label>
                                <label><input type="checkbox">关联图案填充<span class="m">(<u>V</u>)</span></label>
                                <label><input type="checkbox" checked>隐含选择窗口中的对象<span class="m">(<u>I</u>)</span></label>
                                <label class="sub"><input type="checkbox">允许按住并拖动对象<span class="m">(<u>D</u>)</span></label>
                                <label class="sub"><input type="checkbox" checked>允许按住并拖动套索<span class="m">(<u>L</u>)</span></label>
                            </div>
                            <label class="caption" for="method">窗口选择方法<span class="m">(<u>L</u>):</span></label>
                            <div class="combo long"><select id="method"><option>两者 - 自动检测</option></select><svg class="chev"><use href="#chevron"/></svg></div>
                            <div class="number-row limit">
                                <input type="text" id="limit" value="25000">
                                <label for="limit">“特性”选项板的对象限制<span class="m">(<u>J</u>)</span></label>
                            </div>
                            <label class="caption" for="effect">选择效果颜色<span class="m">(<u>E</u>):</span></label>
                            <div class="combo"><span class="swatch"></span><select id="effect"><option>默认</option></select><svg class="chev"><use href="#chevron"/></svg></div>
                        </div>
                    </fieldset>
                    <fieldset class="ribbon">
                        <legend>功能区选项</legend>
                        <div class="group-body"><button type="button" class="btn long">上下文选项卡状态<span class="m">(<u>A</u>)...</span></button></div>
                    </fieldset>
                </div>
                <div class="column">
                    <fieldset>
                        <legend>夹点尺寸<span class="m">(<u>Z</u>)</span></legend>
                        <div class="group-body size-row">
                            <div class="preview"><span class="gripbox"></span></div>
                            <div class="slider focus"><input type="range" min="0" max="100" value="42" aria-label="夹点尺寸"></div>
                        </div>
                    </fieldset>
                    <fieldset class="grips">
                        <legend>夹点</legend>
                        <div class="group-body">
                            <button type="button" class="btn color">夹点颜色<span class="m">(<u>C</u>)...</span></button>
                            <div class="checks">
                                <label><input type="checkbox" checked>显示夹点<span class="m">(<u>R</u>)</span></label>
                                <label class="inner"><input type="checkbox">在块中显示夹点<span class="m">(<u>B</u>)</span></label>
                                <label class="inner"><input type="checkbox" checked>显示夹点提示<span class="m">(<u>T</u>)</span></label>
                                <label class="inner"><input type="checkbox" checked>显示动态夹点菜单<span class="m">(<u>U</u>)</span></label>
                                <label class="inner"><input type="checkbox" checked>允许按<span class="m">&nbsp;Ctrl&nbsp;</span>键循环改变对象编辑方式行为<span class="m">(<u>Y</u>)</span></label>
                                <label class="inner"><input type="checkbox" checked>对组显示单个夹点<span class="m">(<u>E</u>)</span></label>
                                <label class="deep"><input type="checkbox" checked>对组显示边界框<span class="m">(<u>X</u>)</span></label>
                            </div>
                            <div class="number-row">
                                <input type="text" id="grip-limit" value="100">
                                <label for="grip-limit">选择对象时限制显示的夹点数<span class="m">(<u>M</u>)</span></label>
                            </div>
                        </div>
                    </fieldset>
                    <fieldset class="previews">
                        <legend>预览</legend>
                        <div class="group-body">
                            <p>选择集预览</p>
                            <div class="checks">
                                <label class="step"><input type="checkbox" checked>命令处于活动状态时<span class="m">(<u>S</u>)</span></label>
                                <label class="step"><input type="checkbox" checked>未激活任何命令时<span class="m">(<u>W</u>)</span></label>
                            </div>
                            <button type="button" class="btn long">视觉效果设置<span class="m">(<u>G</u>)...</span></button>
                            <div class="checks">
                                <label><input type="checkbox" checked>命令预览</label>
                                <label><input type="checkbox" checked>特性预览</label>
                            </div>
                        </div>
                    </fieldset>
                </div>
            </div>
            <div class="dialog-buttons">
                <button type="button" class="btn default">确定</button>
                <button type="button" class="btn">取消</button>
                <button type="button" class="btn">应用<span class="m">(<u>A</u>)</span></button>
                <button type="button" class="btn">帮助<span class="m">(<u>H</u>)</span></button>
            </div>
        </div>
        <span class="mark mark-pickbox"></span>
        <span class="mark mark-modes"></span>
        <span class="mark mark-tab"></span>
        <span class="mark mark-grips"></span>
    </form>
</body>

</html>
```
FILE: styles.css
```css
* {
    box-sizing: border-box;
}

body {
    margin: 0;
    height: 100vh;
    display: flex;
    flex-direction: column;
    overflow: hidden;
    background: #5c5c5c;
    font-family: "Noto Sans CJK SC", sans-serif;
    font-size: 15px;
    color: #000;
}

button,
input,
select {
    font: inherit;
    color: inherit;
    margin: 0;
    padding: 0;
    border: 0;
    background: none;
}

button {
    display: flex;
    align-items: center;
    justify-content: center;
}

p,
h1,
h2,
ul {
    margin: 0;
    padding: 0;
    font-weight: normal;
}

svg {
    flex: none;
}

.defs {
    position: absolute;
    width: 0;
    height: 0;
}

.arrow {
    width: 8px;
    height: 8px;
    color: #fff;
}

.arrow.dark {
    color: #333;
}

.arrow.up {
    transform: rotate(180deg);
    color: #111;
}

/* title bar */
.titlebar {
    height: 30px;
    display: flex;
    background: #fff;
    border-bottom: 1px solid #2b332b;
}

.app-button {
    width: 40px;
    height: 40px;
    position: relative;
    z-index: 1;
    background: linear-gradient(#777, #b5b5b5 50%, #777);
    border: solid #000;
    border-width: 0 1px 1px 0;
}

.quick-access {
    width: 27px;
    background: linear-gradient(#777, #999);
}

.titlebar h1 {
    flex: 1;
    padding-left: 494px;
    font-size: 15px;
    line-height: 28px;
}

.infocenter {
    width: 556px;
    display: flex;
    align-items: center;
    background: linear-gradient(#808080, #999);
    color: #fff;
}

.infocenter button {
    height: 29px;
    width: 30px;
}

.infocenter .expand {
    width: 17px;
    background: #999;
}

.search {
    width: 225px;
    height: 28px;
    padding: 0 4px 4px;
    background: #757575;
    border: 1px solid #333;
    font-style: italic;
    font-size: 14px;
}

.search::placeholder {
    color: #ccc;
}

.infocenter .login {
    width: 68px;
    margin-right: 70px;
    gap: 7px;
    justify-content: flex-start;
    padding-left: 4px;
}

.divider {
    width: 1px;
    height: 20px;
    margin: 0 6px 0 12px;
    background: #aaa;
}

.help span {
    width: 20px;
    border-radius: 50%;
    border: 1px solid #222;
    background: #fff;
    color: #1c4fae;
    font-weight: bold;
    font-size: 16px;
    line-height: 20px;
}

.window-buttons {
    width: 205px;
    display: flex;
    justify-content: space-around;
    padding: 0 4px 4px 26px;
}

.window-buttons button {
    width: 46px;
}

/* menu */
.menubar {
    height: 25px;
    display: flex;
    align-items: center;
    gap: 27px;
    padding: 0 3px 2px 56px;
    background: linear-gradient(#a8a8a8, #5a5a5a);
    line-height: 23px;
    white-space: nowrap;
}

.menubar a {
    color: #fff;
    text-decoration: none;
}

.mdi {
    margin-left: auto;
    display: flex;
    gap: 4px;
}

/* drawing tabs */
.doc-tabs {
    height: 35px;
    display: flex;
    padding: 4px 0 4px 12px;
    background: #383838;
    border-bottom: 3px solid #525252;
}

.doc-tab {
    width: 178px;
    padding-left: 27px;
    justify-content: flex-start;
    background: #575757;
    color: #aaa;
    clip-path: polygon(0 100%, 5px 96%, 9px 80%, 15px 20%, 18px 6%, 25px 0, calc(100% - 26px) 0, calc(100% - 20px) 8%, calc(100% - 16px) 25%, calc(100% - 8px) 80%, calc(100% - 4px) 95%, 100% 100%);
}

.doc-tab.active {
    margin-left: -18px;
    padding-left: 21px;
    background: linear-gradient(#858585, #5e5e5e);
    color: #fff;
    font-family: "Noto Sans", sans-serif;
}

.doc-tab.active svg {
    margin-left: 40px;
}

.add-tab {
    width: 28px;
    height: 19px;
    margin: 4px 0 0 -7px;
    background: #555;
    border: 1px solid #666;
    border-radius: 2px 10px 2px 10px;
    color: #bbb;
    font-size: 20px;
    font-weight: bold;
}

/* main toolbar */
.toolbar-row {
    height: 28px;
    display: flex;
    align-items: flex-start;
}

.toolbar {
    height: 24px;
    display: flex;
    align-items: center;
    border: 1px solid #333;
    border-left: 0;
}

.toolbar button {
    width: 23px;
    height: 22px;
}

.toolbar svg {
    width: 16px;
    height: 16px;
}

.toolbar .mini {
    width: 6px;
    height: 6px;
    margin: 0 3px;
    color: #999;
}

.flip {
    transform: scaleX(-1);
}

.sep {
    width: 2px;
    height: 18px;
    margin: 0 2px;
    background: #333;
    border-right: 1px solid #888;
}

.grip-v {
    width: 5px;
    height: 14px;
    margin-right: 3px;
    background: repeating-linear-gradient(#222 0 1px, transparent 1px 3px);
}

.grip-h {
    width: 14px;
    height: 5px;
    background: repeating-linear-gradient(90deg, #222 0 1px, #777 1px 2px);
}

.layer-combo {
    width: 300px;
    height: 22px;
    display: flex;
    align-items: center;
    padding: 0 4px;
    background: #fafafa;
}

.layer-color {
    width: 11px;
    height: 11px;
    margin: 0 4px 0 6px;
    border: 1px solid #000;
    background: #fff;
}

.layer-combo select {
    flex: 1;
    appearance: none;
    color: #8a5a20;
}

.toolbar .chev,
.chev {
    width: 10px;
    height: 6px;
}

.toolbar .help-box {
    width: 15px;
    height: 16px;
    margin: 0 4px;
    border: 2px solid #ddd;
    background: #333;
    color: #fff;
    font-size: 12px;
    font-weight: bold;
}

/* work area */
.workspace {
    flex: 1;
    min-height: 0;
    display: flex;
}

.layer-palette {
    width: 279px;
    display: flex;
    flex-direction: column;
    align-items: stretch;
}

.collapse {
    width: 15px;
    height: 13px;
    margin: 6px 0 0 4px;
    background: #fff;
    border: 1px solid #aaa;
    border-radius: 3px;
    line-height: 10px;
}

.palette-body {
    flex: 1;
    min-height: 0;
    display: flex;
    flex-direction: column;
    padding: 3px 9px 8px 8px;
    background: #f0f0f0;
}

.palette-tools {
    height: 34px;
    display: flex;
    align-items: center;
    padding: 0 1px 6px 9px;
}

.palette-tools button {
    width: 34px;
    height: 28px;
}

.palette-tools button:first-child {
    width: 32px;
}

.palette-tools svg {
    width: 22px;
    height: 22px;
}

.thin-box {
    width: 2px;
    height: 18px;
    background: #fff;
    border-bottom: 1px solid #888;
}

.palette-tools input {
    flex: 1;
    min-width: 0;
    height: 18px;
    background: #fff;
    border-bottom: 1px solid #888;
}

.layer-box {
    flex: 1;
    min-height: 0;
    display: flex;
    flex-direction: column;
    justify-content: space-between;
    background: #fff;
    border: 1px solid #666;
}

.layer-list {
    list-style: none;
    font-size: 12px;
    margin-left: 11px;
}

.layer-list li {
    height: 16px;
    background: repeating-linear-gradient(90deg, #777 0 1px, transparent 1px 2px) 0 8px / 11px 1px no-repeat;
    border-left: 1px dotted #777;
    padding-left: 10px;
}

.layer-list label {
    display: flex;
    align-items: center;
    height: 16px;
    line-height: 15px;
    white-space: nowrap;
}

.layer-list i {
    width: 14px;
    height: 14px;
    margin: 0 5px 0 1px;
    border: 1px solid #999;
    box-shadow: inset 0 0 0 1px #fff;
    background: #fff;
}

.layer-list b {
    width: 90px;
    font-family: "Liberation Mono", monospace;
    font-size: 10px;
    font-weight: normal;
}

.layer-list .yellow { background: #ff0; }
.layer-list .pink { background: #ff7f7f; }
.layer-list .cyan { background: #0ff; }
.layer-list .green { background: #0f0; }
.layer-list .red { background: #f00; }
.layer-list .magenta { background: #f0f; }
.layer-list .blue { background: #00f; }

.scrollbar {
    height: 20px;
    padding: 7px 58px 7px 21px;
    background: #f0f0f0;
}

.scrollbar span {
    display: block;
    height: 6px;
    background: #868686;
}

.palette-tabs {
    height: 32px;
    display: flex;
    align-items: flex-end;
    margin-bottom: 1px;
    background: #f0f0f0;
    border-top: 6px solid #fafafa;
}

.palette-tabs button {
    height: 26px;
    padding: 0 6px 3px 7px;
    gap: 6px;
    border-right: 1px solid #ddd;
}

.palette-tabs .active {
    background: #fafafa;
}

.palette-tabs svg {
    width: 16px;
    height: 16px;
}

/* tick boxes */
input[type="checkbox"] {
    appearance: none;
    width: 16px;
    height: 16px;
    flex: none;
    display: grid;
    place-items: center;
    border: 1px solid #666;
    border-radius: 3px;
    background: #f3f3f3;
}

input[type="checkbox"]:checked {
    border-color: #0560b8;
    background: #0560b8;
}

input[type="checkbox"]:checked::after {
    content: "";
    width: 8px;
    height: 4px;
    margin-bottom: 3px;
    border: solid #fff;
    border-width: 0 0 1px 1px;
    transform: rotate(-45deg);
}

/* vertical toolbars */
.side-toolbar {
    width: 25px;
    align-self: flex-start;
    display: flex;
    flex-direction: column;
    align-items: center;
    margin: 0 4px 0 2px;
    padding: 2px 0 0;
    border: 1px solid #333;
}

.side-toolbar.right {
    margin: 0 5px 0 4px;
}

.side-toolbar .grip-h {
    margin-bottom: 1px;
}

.side-toolbar button {
    width: 22px;
    height: 22px;
}

.side-toolbar svg {
    width: 16px;
    height: 16px;
}

.side-toolbar hr {
    width: 19px;
    height: 2px;
    margin: 2px 0 1px;
    border: 0;
    background: #eee;
}

.side-toolbar .glyph {
    color: #f00;
    font-size: 16px;
}

.side-toolbar .small {
    font-size: 12px;
    font-weight: bold;
}

/* drawing area */
.canvas {
    flex: 1;
    position: relative;
    margin-bottom: 1px;
    background: #000;
}

.view-label {
    padding: 3px;
    color: #eee;
    font-size: 13px;
    line-height: 20px;
}

.viewcube {
    position: absolute;
    top: 22px;
    right: 24px;
    width: 120px;
    height: 120px;
    display: grid;
    grid-template-columns: minmax(0, 1fr) 52px minmax(0, 1fr);
    grid-template-rows: minmax(0, 1fr) 52px minmax(0, 1fr);
    place-items: center;
    border: 13px solid #292929;
    border-radius: 50%;
    color: #999;
    font-size: 18px;
}

.viewcube .face {
    grid-area: 2 / 2;
    width: 52px;
    height: 52px;
    border: 1px solid #777;
    background: #a3a3a3;
    box-shadow: inset 0 0 0 9px #a3a3a3, inset 0 0 0 40px #95959a;
    font-family: "Liberation Serif", "Noto Sans CJK SC", serif;
    font-size: 28px;
    color: #555;
}

.viewcube span {
    line-height: 20px;
}

.north { grid-area: 1 / 2; margin-bottom: 38px; }
.south { grid-area: 3 / 2; margin-top: 38px; }
.west { grid-area: 2 / 1; margin-right: 38px; }
.east { grid-area: 2 / 3; margin-left: 38px; }

.wcs {
    position: absolute;
    top: 169px;
    right: 60px;
    width: 47px;
    height: 18px;
    gap: 4px;
    border: 1px solid #666;
    border-radius: 4px;
    background: #7c7c80;
    color: #444;
    font-family: "Liberation Sans", sans-serif;
    font-size: 11px;
}

.wcs .arrow {
    color: #aaa;
}

.navbar {
    position: absolute;
    top: 212px;
    right: 4px;
    width: 32px;
    height: 212px;
    border-radius: 4px;
    background: #484848;
}

/* command window */
.command-window {
    position: absolute;
    left: 0;
    bottom: 0;
    width: 548px;
    height: 237px;
    display: flex;
    border: solid #555;
    border-width: 0 1px 1px 0;
}

.command-strip {
    width: 29px;
    display: flex;
    flex-direction: column;
    align-items: center;
    gap: 11px;
    padding-top: 5px;
    background: linear-gradient(#555, #2d2d2d);
}

.command-strip .grip-h {
    width: 22px;
}

.command-main {
    flex: 1;
    display: flex;
    flex-direction: column;
}

.history {
    flex: 1;
    padding: 22px 3px 0;
    background: #8b8b8b;
    font-size: 20px;
    line-height: 23px;
    white-space: nowrap;
    overflow: hidden;
}

.history p {
    height: 23px;
}

.history span,
.prompt input {
    font-family: "Liberation Mono", monospace;
    font-size: 18px;
}

.prompt {
    height: 27px;
    display: flex;
    align-items: center;
    gap: 4px;
    padding: 1px 6px 0;
    background: #b2b2b2;
    border-top: 1px solid #555;
}

.prompt .arrow:not(.up) {
    width: 6px;
    height: 6px;
    color: #555;
}

.prompt input {
    flex: 1;
}

/* tool palette */
.tool-palette {
    width: 219px;
    display: flex;
    flex-direction: column;
    padding: 2px 0 5px;
    color: #fff;
    font-size: 13px;
}

.palette-head {
    height: 28px;
    padding: 6px;
    background: #515151;
    border-radius: 4px 0 0 0;
}

.palette-head .grip-v {
    display: block;
    width: 3px;
    height: 10px;
}

.palette-columns {
    flex: 1;
    min-height: 0;
    display: flex;
    margin-top: 1px;
}

.palette-main {
    flex: 1;
    display: flex;
    flex-direction: column;
    background: #3c3c3c;
}

.view-modes {
    height: 15px;
    display: flex;
    padding-left: 13px;
    border: 1px solid #2c2c2c;
    background: #484848;
}

.view-modes button {
    width: 20px;
}

.view-modes .active {
    background: #2e2e2e;
}

.view-modes svg {
    width: 10px;
    height: 10px;
}

.section {
    height: 28px;
    text-align: center;
    font-size: 13px;
    line-height: 26px;
    padding-left: 8px;
    background: linear-gradient(135deg, transparent 50%, #888 50%) right bottom / 7px 7px no-repeat #363636;
    border-bottom: 1px solid #2a2a2a;
}

.section.low {
    background-color: #454545;
}

.tiles {
    flex: 1;
    display: grid;
    grid-template-columns: 66px 66px;
    align-content: start;
    gap: 19px 18px;
    padding: 11px 21px;
}

.tile {
    flex-direction: column;
    height: 84px;
    justify-content: flex-start;
    line-height: 16px;
}

.tile svg,
.letter {
    width: 66px;
    height: 66px;
    flex: none;
    background: #000;
}

.tile .letter {
    font-family: "Liberation Serif", serif;
    font-size: 26px;
    line-height: 68px;
}

.category-tabs {
    width: 29px;
    background: #484848;
}

.tabs-grip {
    height: 15px;
    padding: 5px 7px;
}

.tabs-grip .grip-h {
    display: block;
}

.category-tabs button {
    width: 29px;
    height: 64px;
    padding: 0 8px 2px 6px;
    border-top: 1px solid #777;
    border-bottom: 1px solid #2e2e2e;
    border-left: 1px solid #2e2e2e;
    background: #5a5a5a;
    line-height: 15px;
}

.category-tabs .active {
    background: #484848;
}

/* status bar */
.statusbar {
    height: 36px;
    display: flex;
    justify-content: space-between;
    background: #383838;
    border-top: 1px solid #666;
    color: #fff;
}

.layout-tabs {
    display: flex;
    padding-left: 12px;
    height: 22px;
    line-height: 19px;
}

.layout-tabs button {
    width: 62px;
    padding-bottom: 3px;
    background: #555;
    color: #aaa;
    clip-path: polygon(0 0, 100% 0, calc(100% - 4px) 30%, calc(100% - 8px) 90%, calc(100% - 12px) 100%, 12px 100%, 8px 90%, 4px 30%);
}

.layout-tabs button:nth-child(2) {
    width: 84px;
    font-family: "Noto Sans", sans-serif;
}

.layout-tabs .active {
    background: linear-gradient(#666, #8a8a8a);
    color: #fff;
    font-weight: bold;
}

.layout-tabs .plus {
    width: 38px;
    font-size: 18px;
    font-weight: bold;
}

.status-cells {
    display: flex;
    height: 34px;
    background: #4d4d4d;
}

.cell {
    display: flex;
    align-items: center;
    border: 1px solid #777;
}

.cell button {
    width: 30px;
    height: 32px;
}

.cell .text {
    width: 34px;
}

.cell.wide button {
    width: 38px;
}

.cell .ratio {
    width: 22px;
    font-size: 14px;
}

.cell button svg {
    width: 20px;
    height: 22px;
}

.cell .arrow {
    width: 10px;
    height: 10px;
    margin: 0 5px 0 4px;
}

.on svg {
    filter: drop-shadow(0 0 2px #0a60d0);
}

.blue-icon { color: #2090ff; }
.gray-icon { color: #bbb; }

/* options dialog */
.dialog {
    position: absolute;
    left: 491px;
    top: 204px;
    width: 938px;
    border-radius: 8px;
    background: #f0f0f0;
    box-shadow: 0 0 0 1px #555, 0 6px 24px 4px rgba(0, 0, 0, .5);
}

.m {
    font-family: "Liberation Mono", monospace;
    font-size: 13px;
}

.dialog-title {
    height: 37px;
    display: flex;
    align-items: center;
    gap: 6px;
    padding: 0 14px 3px 9px;
    border-radius: 8px 8px 0 0;
    background: linear-gradient(90deg, #f9f0f1, #f4f2ef 40%, #f9f0ec);
}

.dialog-icon {
    width: 20px;
    height: 20px;
    display: grid;
    place-items: center;
    background: linear-gradient(#f5d5d2, #dd3a3f);
}

.close {
    margin-left: auto;
}

.dialog-content {
    padding: 0 17px 9px 16px;
}

.profile-row {
    height: 30px;
    display: flex;
    align-items: center;
    padding-bottom: 2px;
}

.profile-label {
    width: 143px;
}

.profile-name {
    width: 352px;
}

.drawing-label {
    width: 149px;
    margin-left: 13px;
}

.dialog-tabs {
    height: 23px;
    display: flex;
    align-items: flex-end;
    padding-left: 2px;
}

.dialog-tabs button {
    height: 21px;
    padding: 0 3px 2px 6px;
    justify-content: flex-start;
    border: solid #e2e2e2;
    border-width: 1px 1px 0 0;
    background: #f3f3f3;
    line-height: 18px;
    white-space: nowrap;
}

.dialog-tabs .first {
    width: 59px;
    padding-left: 13px;
    border-left-width: 1px;
}

.dialog-tabs .w60 {
    width: 60px;
}

.dialog-tabs .w58 {
    width: 58px;
    padding-left: 4px;
}

.dialog-tabs .active {
    width: 62px;
    height: 23px;
    padding-bottom: 4px;
    background: #f9f9f9;
}

.page {
    display: grid;
    grid-template-columns: 1fr 1fr;
    gap: 16px;
    padding: 9px 24px 6px 13px;
    border: 1px solid #dfdfdf;
    background: #f9f9f9;
}

fieldset {
    margin: 0;
    padding: 0 6px;
    min-width: 0;
    border: 1px solid #dcdcdc;
}

legend {
    padding: 0 2px;
    height: 16px;
    line-height: 15px;
}

.group-body {
    padding: 0 9px;
}

.size-row {
    display: flex;
    padding-top: 2px;
    padding-bottom: 7px;
}

.preview {
    width: 68px;
    height: 58px;
    display: grid;
    place-items: center;
    background: #000;
}

.pickbox {
    width: 16px;
    height: 16px;
    border: 1px solid #fff;
}

.gripbox {
    width: 20px;
    height: 20px;
    border: 1px solid #666;
    background: #0a80ff;
}

.slider {
    height: 28px;
    display: flex;
    align-items: center;
    margin: 16px 0 0 10px;
    padding: 0 10px;
}

.slider.focus {
    margin: 15px 0 0 12px;
    padding: 0 9px;
    border: 1px dotted #000;
}

input[type="range"] {
    appearance: none;
    width: 252px;
    height: 26px;
}

input[type="range"]::-webkit-slider-runnable-track {
    height: 5px;
    border: 1px solid #d4d4d4;
    background: #e7eaea;
}

input[type="range"]::-webkit-slider-thumb {
    appearance: none;
    width: 14px;
    height: 26px;
    margin-top: -12px;
    background: #0078d7;
}

.selection-modes {
    margin-top: 6px;
    padding-bottom: 11px;
}

.checks {
    display: grid;
    grid-auto-rows: 24px;
}

.selection-modes .checks {
    height: 171px;
    grid-auto-rows: 1fr;
}

.grips .checks {
    grid-auto-rows: 26px;
}

.checks label {
    display: flex;
    align-items: center;
    line-height: 20px;
    white-space: nowrap;
}

.checks input {
    margin-right: 4px;
}

.checks .sub { padding-left: 24px; }
.checks .inner { padding-left: 14px; }
.checks .deep { padding-left: 44px; }
.checks .step { padding-left: 10px; }

.caption {
    display: block;
    height: 20px;
    line-height: 19px;
}

.combo {
    width: 208px;
    height: 24px;
    display: flex;
    align-items: center;
    margin-top: 4px;
    padding: 0 5px 0 4px;
    border: 1px solid #ccc;
    border-radius: 2px;
    background: #fff;
}

.combo.long {
    width: 298px;
    margin-top: 3px;
}

.combo select {
    flex: 1;
    appearance: none;
    font-family: "Liberation Mono", "Noto Sans CJK SC", monospace;
}

.swatch {
    width: 13px;
    height: 13px;
    margin-right: 4px;
    border: 1px solid #000;
    background: #2f7bff;
}

.number-row {
    display: flex;
    margin-top: 3px;
    line-height: 19px;
}

.number-row.limit {
    margin: 10px 0 3px;
}

.number-row input {
    width: 60px;
    height: 26px;
    margin-right: 13px;
    padding: 0 3px 4px;
    border: 1px solid #e5e5e5;
    border-bottom-color: #777;
    border-radius: 2px;
    background: #fff;
    font-family: "Liberation Mono", monospace;
    font-size: 13px;
}

.btn {
    width: 98px;
    height: 24px;
    padding-bottom: 1px;
    border: 1px solid #d0d0d0;
    border-bottom-color: #bbb;
    border-radius: 4px;
    background: #fdfdfd;
}

.btn.long {
    width: 230px;
}

.ribbon {
    margin-top: 2px;
}

.ribbon .btn {
    margin: 18px 57px 28px;
}

.grips {
    margin-top: 3px;
    padding-bottom: 2px;
}

.btn.color {
    width: 152px;
    margin: 4px 0 0 95px;
}

.previews p {
    height: 22px;
    line-height: 21px;
}

.previews .btn {
    margin: 3px 0 2px 11px;
}

.previews {
    padding-bottom: 1px;
}

.dialog-buttons {
    display: flex;
    justify-content: flex-end;
    gap: 10px;
    margin-top: 12px;
}

.btn.default {
    border-color: #0067c0;
}

/* red marks drawn over the dialog */
.mark {
    position: absolute;
    border: 4px solid #ff1200;
    border-radius: 2px;
    pointer-events: none;
}

.mark-pickbox {
    left: 47px;
    top: 105px;
    width: 361px;
    height: 81px;
}

.mark-modes {
    left: 43px;
    top: 197px;
    width: 264px;
    height: 59px;
}

.mark-tab {
    left: 595px;
    top: 52px;
    width: 62px;
    height: 36px;
}

.mark-grips {
    left: 474px;
    top: 92px;
    width: 378px;
    height: 86px;
}
```
